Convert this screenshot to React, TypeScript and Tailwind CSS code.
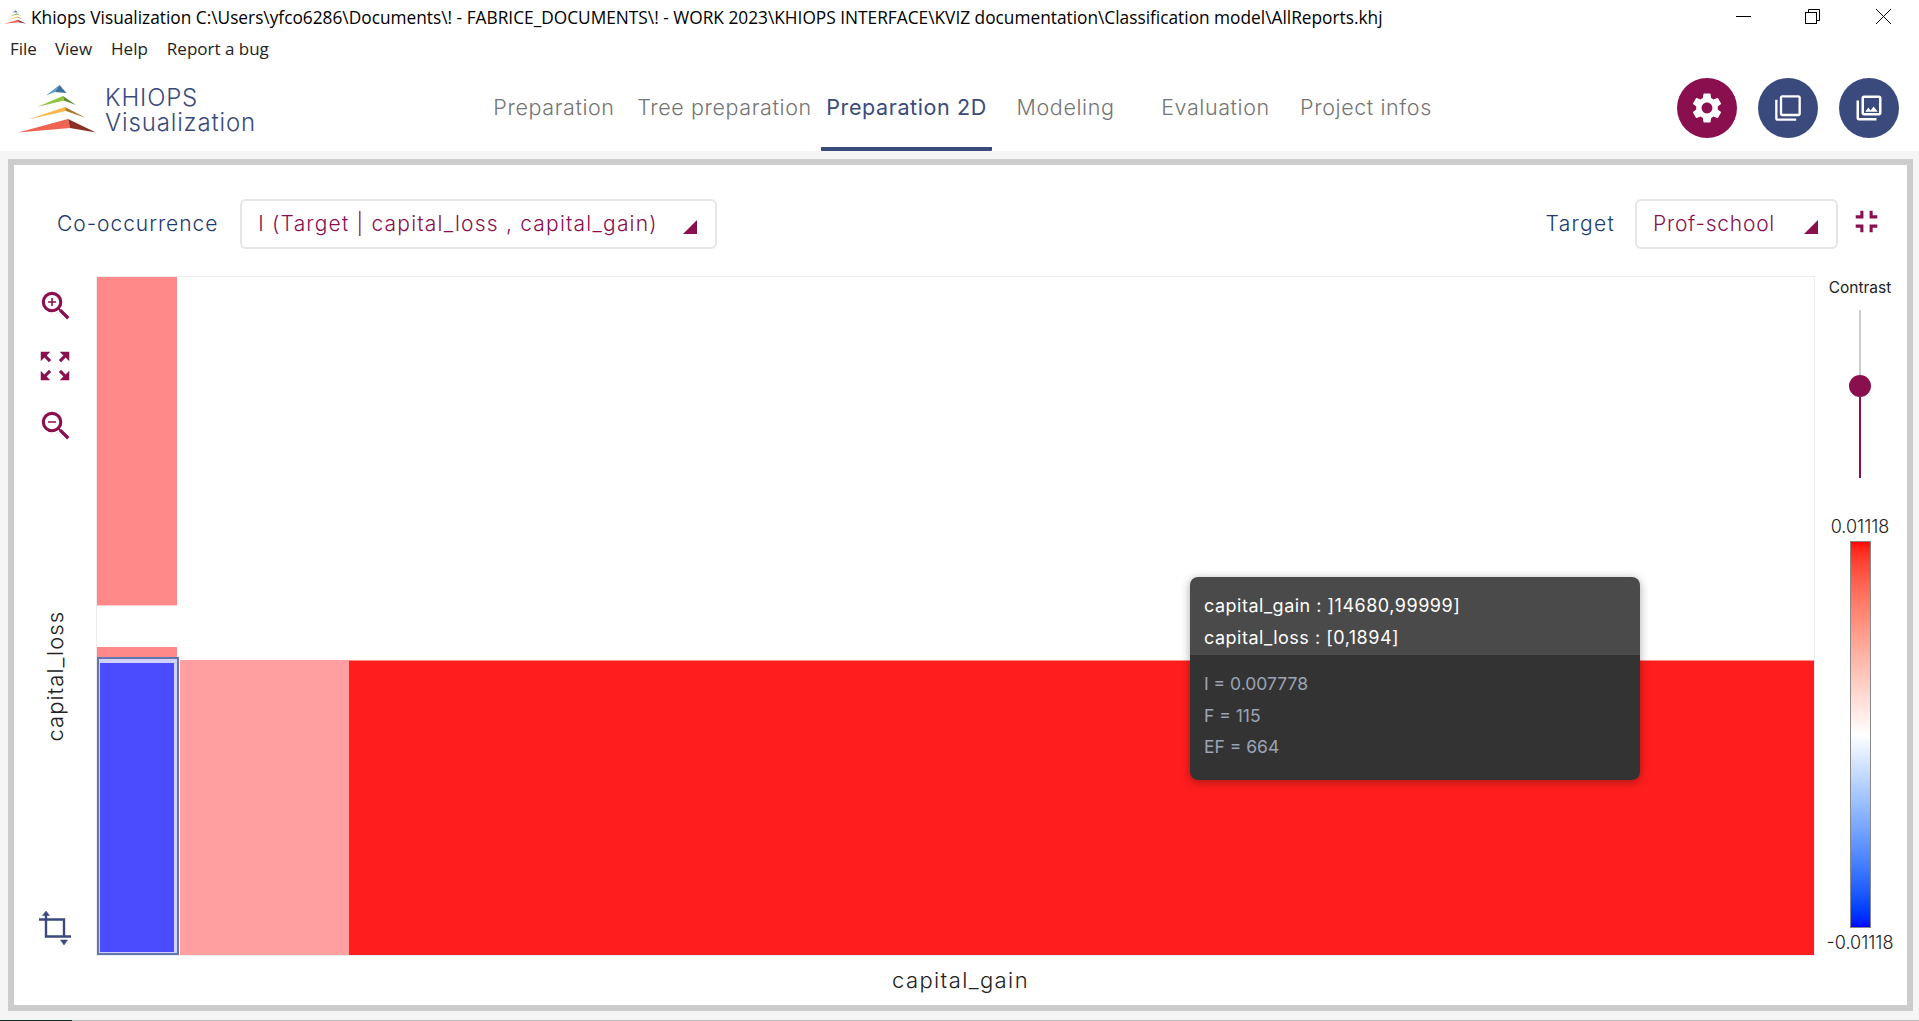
import React from 'react';
import { MdSettings, MdOutlineFilterNone, MdOutlinePhotoLibrary, MdZoomIn, MdZoomOut, MdZoomOutMap, MdFullscreenExit } from 'react-icons/md';

const tabs = [
    { label: 'Preparation', box: 'w-[124px]' },
    { label: 'Tree preparation', box: 'w-[177px] ml-[20px]' },
    { label: 'Preparation 2D', box: 'w-[171px] ml-[8px]', active: true },
    { label: 'Modeling', box: 'w-[97px] ml-[25px]' },
    { label: 'Evaluation', box: 'w-[109px] ml-[47px]' },
    { label: 'Project infos', box: 'w-[128px] ml-[32px]' },
];

const Logo = ({ className }: { className: string }) => (
    <svg viewBox="18 84 78 48" className={className}>
        <polygon points="46,94.5 59.5,84 55,91" fill="#5a9bc9" />
        <polygon points="59.5,84 66.5,92 55,91" fill="#3f6f9b" />
        <polygon points="37,106 63,95 64,99.5" fill="#8cc63f" />
        <polygon points="63,95 76,104 64,99.5" fill="#5f8a2e" />
        <polygon points="28,118.5 65,106 66,110" fill="#fdb64a" />
        <polygon points="65,106 86,117 66,110" fill="#a87a2b" />
        <polygon points="18,131.5 68,118 70,127" fill="#ee6352" />
        <polygon points="68,118 96,131.5 70,127" fill="#8c3027" />
    </svg>
);

const SelectBox = ({ text, className }: { text: string; className: string }) => (
    <div className={`h-[50px] flex items-center justify-between bg-white border-2 border-[#e6e6e6] rounded-md text-[#8a0f4f] text-[21px] font-light pl-[16px] pr-[18px] ${className}`}>
        <span className="whitespace-nowrap">{text}</span>
        <svg width="14" height="14" viewBox="0 0 14 14" className="mt-[5px]">
            <polygon points="14,0 14,14 0,14" fill="#8a0f4f" />
        </svg>
    </div>
);

const RoundButton = ({ color, children }: { color: string; children: React.ReactNode }) => (
    <div className={`w-[60px] h-[60px] rounded-full flex items-center justify-center text-white ${color}`}>{children}</div>
);

export default function App() {
    return (
        <div className="w-full h-screen overflow-hidden flex flex-col bg-[#f5f5f5] text-[#1f1f1f] font-['Inter',sans-serif]">
            <div className="h-[33px] bg-white flex items-center font-['Open_Sans',sans-serif] text-[17.3px] text-black">
                <Logo className="w-[22px] h-[14px] ml-[4px] mr-[5px]" />
                <span className="whitespace-nowrap pt-[2px]">Khiops Visualization C:\Users\yfco6286\Documents\! - FABRICE_DOCUMENTS\! - WORK 2023\KHIOPS INTERFACE\KVIZ documentation\Classification model\AllReports.khj</span>
                <div className="ml-auto flex items-center mr-[28px]">
                    <svg width="15" height="15" viewBox="0 0 15 15" className="mr-[54px]"><path d="M0 7.5h15" stroke="black" /></svg>
                    <svg width="15" height="15" viewBox="0 0 15 15" fill="none" stroke="black" className="mr-[56px]">
                        <rect x="0.5" y="3.5" width="11" height="11" />
                        <path d="M3.5 3.5V0.5H14.5V11.5H11.5" />
                    </svg>
                    <svg width="15" height="15" viewBox="0 0 15 15" stroke="black"><path d="M0 0L15 15M15 0L0 15" /></svg>
                </div>
            </div>
            <div className="h-[32px] bg-white flex items-center font-['Open_Sans',sans-serif] text-[17px] text-[#222] pl-[10px] pb-[1px]">
                <span>File</span>
                <span className="ml-[18px]">View</span>
                <span className="ml-[19px]">Help</span>
                <span className="ml-[19px]">Report a bug</span>
            </div>

            <div className="h-[86px] bg-white flex items-center">
                <div className="w-[492px] flex items-center pl-[18px]">
                    <Logo className="w-[78px] h-[48px] mt-[2px]" />
                    <div className="ml-[9px] text-[#3a4a7c] text-[24px] leading-[25px] font-light mt-[3px] tracking-[0.85px]">
                        <div>KHIOPS</div>
                        <div>Visualization</div>
                    </div>
                </div>
                <div className="flex h-full">
                    {tabs.map((tab) => (
                        <div
                            key={tab.label}
                            className={`${tab.box} h-full flex items-center justify-center text-[21.5px] tracking-[0.6px] whitespace-nowrap pt-[3px] border-b-4 rounded-b-[1px] ${tab.active ? 'text-[#3a4a7c] border-[#3a4a7c] font-normal' : 'text-[#757575] border-transparent font-light'}`}
                        >
                            {tab.label}
                        </div>
                    ))}
                </div>
                <div className="ml-auto flex gap-[21px] mr-[20px]">
                    <RoundButton color="bg-[#8a0f4f]"><MdSettings size={36} /></RoundButton>
                    <RoundButton color="bg-[#3a4a7c]"><MdOutlineFilterNone size={28} /></RoundButton>
                    <RoundButton color="bg-[#3a4a7c]"><MdOutlinePhotoLibrary size={30} /></RoundButton>
                </div>
            </div>

            <div className="mt-[8px] ml-[8px] mr-[6px] h-[852px] border-[6px] border-[#cccccc] bg-white flex flex-col">
                <div className="h-[111px] shrink-0 flex items-start pt-[34px] pl-[43px]">
                    <span className="text-[21px] font-light tracking-[0.95px] text-[#1e3a6e] leading-[50px] whitespace-nowrap">Co-occurrence</span>
                    <SelectBox text="I (Target | capital_loss , capital_gain)" className="w-[477px] ml-[22px] tracking-[1.2px]" />
                    <span className="ml-auto text-[21px] font-light tracking-[1.3px] text-[#1e3a6e] leading-[50px]">Target</span>
                    <SelectBox text="Prof-school" className="w-[203px] ml-[20px] tracking-[0.75px]" />
                    <MdFullscreenExit size={37} className="text-[#8a0f4f] ml-[10px] mt-[4px] mr-[22px]" />
                </div>

                <div className="flex h-[680px] shrink-0">
                    <div className="w-[82px] flex flex-col items-center text-[#8a0f4f]">
                        <MdZoomIn size={38} className="mt-[11px] -mr-[1px]" />
                        <MdZoomOutMap size={38} className="mt-[22px]" />
                        <MdZoomOut size={38} className="mt-[22px] -mr-[1px]" />
                        <span className="mt-[166px] text-[22px] font-light tracking-[1px] text-[#222] leading-[24px] [writing-mode:vertical-rl] rotate-180">capital_loss</span>
                        <svg viewBox="0 0 32 34" width="32" height="34" className="mt-[170px]" fill="none" stroke="#3a4a7c" strokeWidth="2.5">
                            <path d="M0 8.5H25V26M7 2V25.5H32" strokeWidth="2.4" />
                            <path d="M7 0L3.5 4.5H10.5Z M25 34L21.5 29H28.5Z" fill="#3a4a7c" strokeWidth="0.5" />
                        </svg>
                    </div>

                    <div className="relative w-[1719px] border border-[#ececec] grid grid-cols-[83px_169px_1fr] grid-rows-[329px_41px_10px_1px_1fr]">
                        <div className="w-[80px] bg-[#ff8888] border-b border-[#ffd0d0]" />
                        <div className="col-span-3" />
                        <div className="w-[80px] bg-[#ff8888]" />
                        <div className="row-span-2 col-start-1 row-start-4 mr-[1px] border-2 border-[#6275ac] bg-[#d0d2fc] pt-[4px] pl-[1px] pr-[3px] pb-[1px]">
                            <div className="h-full w-full bg-[#4c4cff]" />
                        </div>
                        <div className="row-start-5 col-start-2 mt-[2px] bg-[#ff9f9f]" />
                        <div className="row-start-5 col-start-3 mt-[2px] bg-[#ff1e1e] border-t border-[#ff8c8c]" />

                        <div className="absolute left-[1093px] top-[300px] w-[450px] h-[203px] rounded-lg overflow-hidden shadow-[0_2px_10px_rgba(0,0,0,0.35)]">
                            <div className="h-[78px] bg-[#4a4a4a] text-white pl-[14px] pt-[13px] text-[18px] tracking-[0.5px] leading-[32px] font-normal">
                                <div>capital_gain : ]14680,99999]</div>
                                <div>capital_loss : [0,1894]</div>
                            </div>
                            <div className="h-[125px] bg-[#333333] text-[#9ca3b5] pl-[14px] pt-[13px] text-[17.5px] leading-[31.5px] font-normal">
                                <div>I = 0.007778</div>
                                <div>F = 115</div>
                                <div>EF = 664</div>
                            </div>
                        </div>
                    </div>

                    <div className="flex-1 flex flex-col items-center text-[#222] pr-[2px]">
                        <span className="text-[15.5px] mt-[3px] leading-[18px] whitespace-nowrap">Contrast</span>
                        <div className="mt-[13px] w-[2px] h-[65px] bg-[#cccccc]" />
                        <div className="w-[22px] h-[22px] rounded-full bg-[#8a0f4f]" />
                        <div className="w-[2px] h-[81px] bg-[#8a0f4f]" />
                        <span className="mt-[37px] text-[18px] font-light leading-[24px]">0.01118</span>
                        <div className="mt-[2px] w-[21px] h-[387px] border border-[#888888] bg-gradient-to-b from-[#ff0000] via-[#ffffff] to-[#0000ff]" />
                        <span className="mt-[3px] text-[18px] font-light leading-[24px] whitespace-nowrap">-0.01118</span>
                    </div>
                </div>

                <div className="pl-[92px] pr-[92px] text-center text-[22px] font-light tracking-[1.4px] text-[#222] pt-[10px] leading-[28px]">capital_gain</div>
            </div>

            <div className="mt-auto h-px flex">
                <div className="w-[72px] bg-[#0e2f23]" />
                <div className="flex-1 bg-[#bbbbbb]" />
            </div>
        </div>
    );
}
